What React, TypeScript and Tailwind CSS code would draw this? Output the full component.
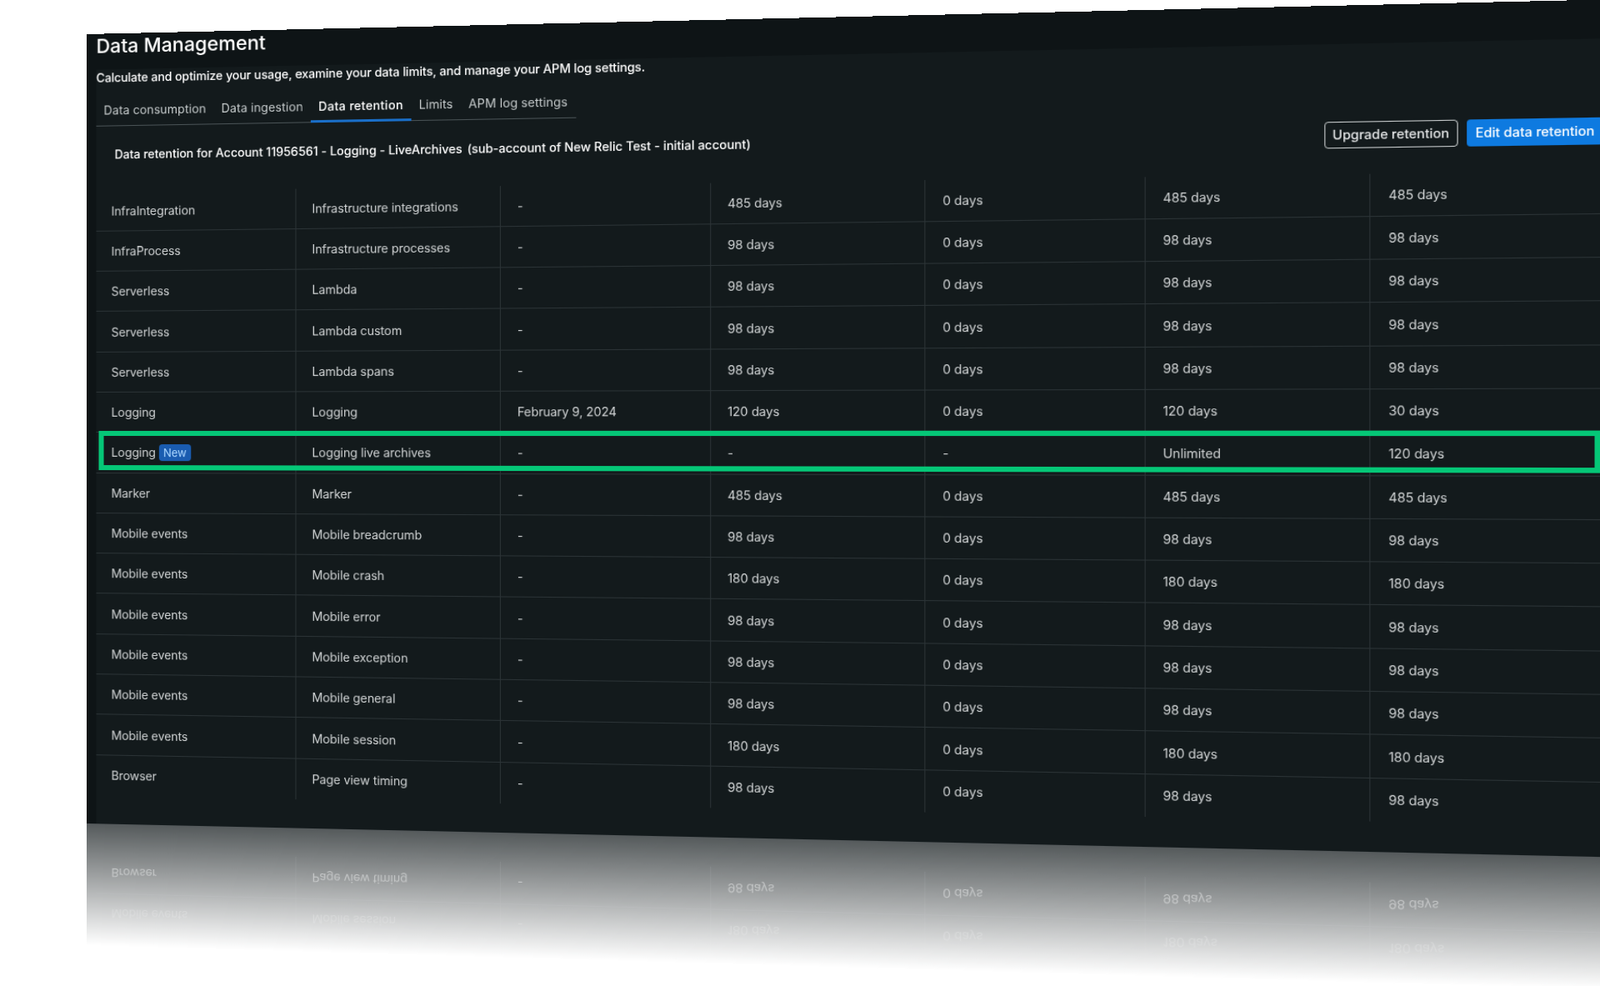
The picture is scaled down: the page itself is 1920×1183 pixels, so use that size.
const rows: string[][] = [
  ["InfraIntegration", "Infrastructure integrations", "-", "485 days", "0 days", "485 days", "485 days"],
  ["InfraProcess", "Infrastructure processes", "-", "98 days", "0 days", "98 days", "98 days"],
  ["Serverless", "Lambda", "-", "98 days", "0 days", "98 days", "98 days"],
  ["Serverless", "Lambda custom", "-", "98 days", "0 days", "98 days", "98 days"],
  ["Serverless", "Lambda spans", "-", "98 days", "0 days", "98 days", "98 days"],
  ["Logging", "Logging", "February 9, 2024", "120 days", "0 days", "120 days", "30 days"],
  ["Logging", "Logging live archives", "-", "-", "-", "Unlimited", "120 days"],
  ["Marker", "Marker", "-", "485 days", "0 days", "485 days", "485 days"],
  ["Mobile events", "Mobile breadcrumb", "-", "98 days", "0 days", "98 days", "98 days"],
  ["Mobile events", "Mobile crash", "-", "180 days", "0 days", "180 days", "180 days"],
  ["Mobile events", "Mobile error", "-", "98 days", "0 days", "98 days", "98 days"],
  ["Mobile events", "Mobile exception", "-", "98 days", "0 days", "98 days", "98 days"],
  ["Mobile events", "Mobile general", "-", "98 days", "0 days", "98 days", "98 days"],
  ["Mobile events", "Mobile session", "-", "180 days", "0 days", "180 days", "180 days"],
  ["Browser", "Page view timing", "-", "98 days", "0 days", "98 days", "98 days"],
];

const tabs = ["Data consumption", "Data ingestion", "Data retention", "Limits", "APM log settings"];

function TableRow({ row, highlighted, last }: { row: string[]; highlighted?: boolean; last?: boolean }) {
  return (
    <div
      className={
        last
          ? "relative grid grid-cols-[236.5px_repeat(6,237.5px)] h-[48.3px]"
          : "relative grid grid-cols-[236.5px_repeat(6,237.5px)] h-[48.3px] border-b border-[#2b3336]"
      }
    >
      {row.map((cell, j) => (
        <div
          key={j}
          className={
            j === 0
              ? "flex items-center gap-1 pl-[18px] border-r border-[#2b3336] text-[14px] tracking-[-0.09px] text-[#d0d3d4]"
              : j === 6
                ? "flex items-center pl-[19px] text-[14px] tracking-[-0.09px] text-[#d0d3d4]"
                : "flex items-center pl-[19px] border-r border-[#2b3336] text-[14px] tracking-[-0.09px] text-[#d0d3d4]"
          }
        >
          {cell}
          {highlighted && j === 0 && (
            <span className="h-5 px-[5px] rounded-sm bg-[#1a5cb0] text-[13px] leading-5 text-[#a9d6ff]">New</span>
          )}
        </div>
      ))}
      {highlighted && (
        <div className="absolute left-[3px] top-[-2px] h-[47px] w-[1658px] border-[6.5px] border-[#05c777]" />
      )}
    </div>
  );
}

function Panel() {
  return (
    <div className="h-[947px] w-[1760px] bg-[#0e1416] pl-3 flex flex-col">
      <h1 className="h-[43px] text-[23px] leading-[31px] font-medium text-white">Data Management</h1>
      <div className="flex-1 bg-[#131a1c]">
        <p className="h-5 text-[14px] leading-5 font-medium tracking-[-0.08px] text-white">
          Calculate and optimize your usage, examine your data limits, and manage your APM log settings.
        </p>
        <div className="mt-[11px] flex w-[560px] h-[37px] border-b border-[#4a5356]">
          {tabs.map((tab) => (
            <div
              key={tab}
              className={
                tab === "Data retention"
                  ? "px-[9px] pt-2 h-[37px] border-b-[3px] border-[#1a6fc9] text-[14px] leading-5 font-medium tracking-[0.3px] text-white"
                  : "px-[9px] pt-2 h-[37px] text-[14px] leading-5 tracking-[0.1px] text-[#c6cbcc]"
              }
            >
              {tab}
            </div>
          ))}
        </div>
        <div className="mt-[19px] flex items-center justify-between w-[1664px] h-[30px] pl-[22px]">
          <p className="text-[14px] leading-5 font-medium tracking-[-0.03px] text-white">
            Data retention for Account 11956561 - Logging - LiveArchives{" "}
            <span className="ml-0.5">(sub-account of New Relic Test - initial account)</span>
          </p>
          <div className="flex gap-[9px]">
            <button className="h-[30px] px-2 pb-0.5 rounded border border-[#c9cdce] text-[14px] font-medium text-[#e4e6e7]">
              Upgrade retention
            </button>
            <button className="h-[30px] px-[9px] pb-0.5 rounded bg-[#0e7ae0] text-[14px] font-medium text-white">
              Edit data retention
            </button>
          </div>
        </div>
        <div className="mt-[28.5px] w-[1662px]">
          {rows.map((row, i) => (
            <TableRow key={i} row={row} highlighted={i === 6} last={i === rows.length - 1} />
          ))}
        </div>
      </div>
    </div>
  );
}

export default function App() {
  return (
    <div className="w-[1920px] h-[1183px] bg-white overflow-hidden [font-family:Inter,sans-serif]">
      <div className="w-[1760px] origin-top-left [transform:matrix3d(0.9951,-0.02474,0,-0.0000474,0,1,0,0,0,0,1,0,103.5,41,0,1)]">
        <Panel />
        {/* mirrored last rows under the card, washed out towards white */}
        <div className="relative h-[146px] overflow-hidden bg-[#131a1c]">
          <div className="-scale-y-100 pl-3 w-[1674px]">
            <TableRow row={rows[13]} />
            <TableRow row={rows[14]} last />
            <div className="h-[34.5px]" />
          </div>
          <div className="absolute inset-0 bg-gradient-to-b from-[rgba(19,26,28,0.1)] to-[#131a1c]" />
          <div className="absolute inset-0 bg-gradient-to-b from-[rgba(255,255,255,0.28)] to-white" />
        </div>
      </div>
    </div>
  );
}
